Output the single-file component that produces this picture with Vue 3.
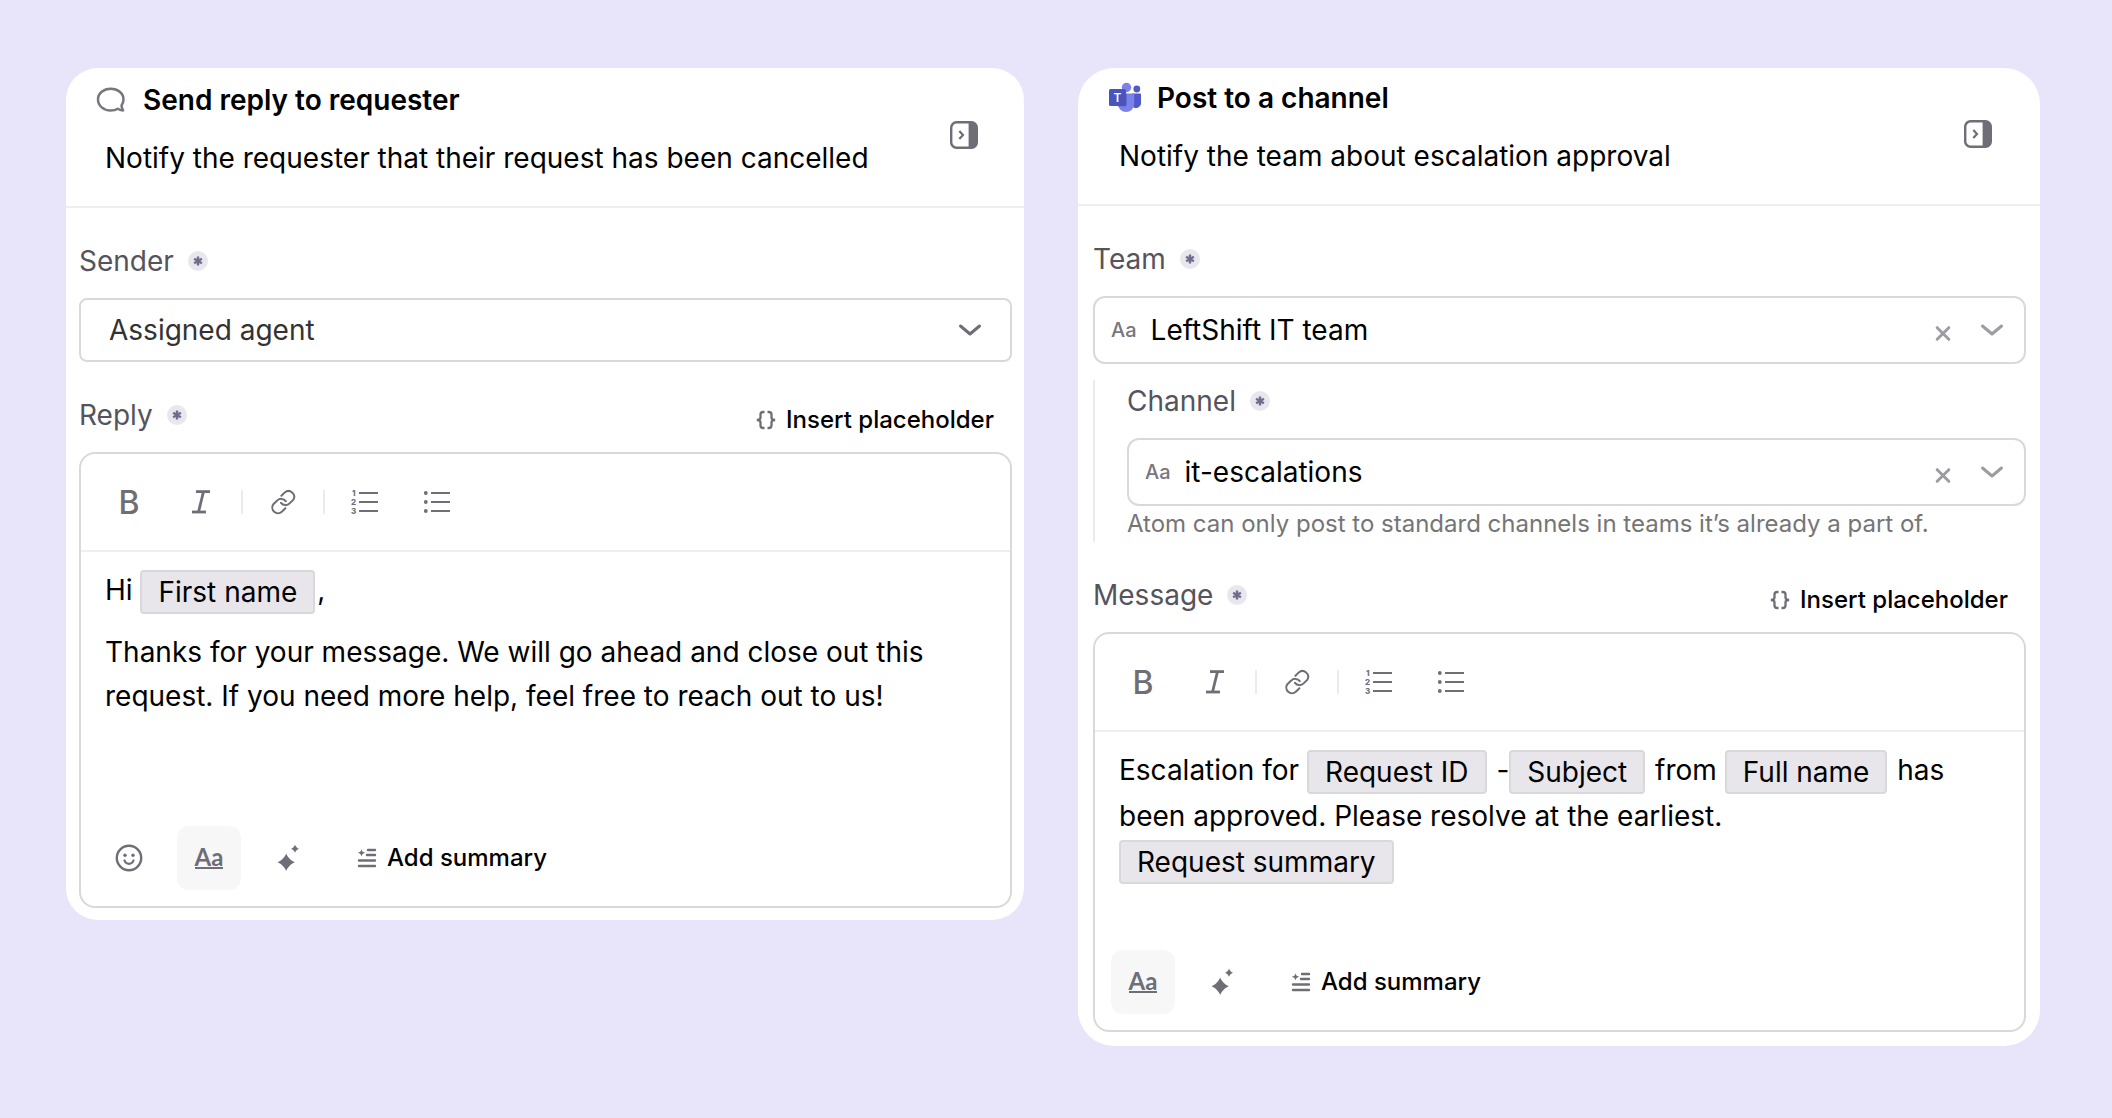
<script setup>
import { reactive } from "vue";

const cards = reactive([
  {
    id: "reply",
    icon: "chat",
    title: "Send reply to requester",
    description: "Notify the requester that their request has been cancelled",
    fields: [
      {
        id: "sender",
        label: "Sender",
        value: "Assigned agent",
        options: ["Assigned agent", "Workspace"],
      },
    ],
    editor: {
      label: "Reply",
      emoji: true,
      paragraphs: [
        [{ text: "Hi " }, { chip: "First name" }, { text: "," }],
        [
          {
            text: "Thanks for your message. We will go ahead and close out this request. If you need more help, feel free to reach out to us!",
          },
        ],
      ],
    },
  },
  {
    id: "channel-post",
    icon: "teams",
    title: "Post to a channel",
    description: "Notify the team about escalation approval",
    fields: [
      {
        id: "team",
        label: "Team",
        value: "LeftShift IT team",
        options: ["LeftShift IT team"],
        clearable: true,
      },
      {
        id: "channel",
        label: "Channel",
        value: "it-escalations",
        options: ["it-escalations"],
        clearable: true,
        nested: true,
        hint: "Atom can only post to standard channels in teams it’s already a part of.",
      },
    ],
    editor: {
      label: "Message",
      emoji: false,
      paragraphs: [
        [
          { text: "Escalation for " },
          { chip: "Request ID" },
          { text: " -" },
          { chip: "Subject" },
          { text: " from " },
          { chip: "Full name" },
          { text: " has " },
          { text: "been approved. Please resolve at the earliest." },
          { lineBreak: true },
          { chip: "Request summary" },
        ],
      ],
    },
  },
]);

const clearField = (field) => {
  field.value = "";
};
</script>

<template>
  <svg class="sprite" aria-hidden="true">
    <symbol id="chat" viewBox="0 0 32 32">
      <path
        d="M26.500 21.500C27.900 19.600 28.500 17.600 28.500 15.500C28.500 9 22.800 4.700 15.700 4.700S3 9.300 3 15.500S8.500 26.500 15.700 26.500C18.400 26.500 20.800 26 22.700 24.700C24.200 25.700 26 26.200 28.100 26.400C27.200 25 26.700 23.300 26.500 21.500Z"
        fill="none"
        stroke="currentColor"
        stroke-width="2.500"
        stroke-linejoin="round"
      />
    </symbol>
    <symbol id="panel" viewBox="0 0 28 28">
      <path
        fill-rule="evenodd"
        d="M6.500 0H21.500A6.500 6.500 0 0 1 28 6.500V21.500A6.500 6.500 0 0 1 21.500 28H6.500A6.500 6.500 0 0 1 0 21.500V6.500A6.500 6.500 0 0 1 6.500 0ZM6.800 2.400A4.400 4.400 0 0 0 2.400 6.800V21.200A4.400 4.400 0 0 0 6.800 25.600H18.600V2.400Z"
        fill="currentColor"
      />
      <path d="M9.300 10L13 14L9.300 18" fill="none" stroke="currentColor" stroke-width="2.200" />
    </symbol>
    <symbol id="required" viewBox="0 0 20 20">
      <circle cx="10" cy="10" r="10" fill="#e9e7ee" />
      <path
        d="M10 5.500V14.500M6.100 7.750L13.900 12.250M13.900 7.750L6.100 12.250"
        stroke="#716c8c"
        stroke-width="2.400"
      />
    </symbol>
    <symbol id="chevron" viewBox="0 0 24 24">
      <path
        d="M2.500 8L12 16L21.500 8"
        fill="none"
        stroke="currentColor"
        stroke-width="3"
        stroke-linecap="round"
        stroke-linejoin="round"
      />
    </symbol>
    <symbol id="clear" viewBox="0 0 24 24">
      <path
        d="M5.200 9.700L16.800 21.300M16.800 9.700L5.200 21.300"
        stroke="currentColor"
        stroke-width="3"
        stroke-linecap="round"
      />
    </symbol>
    <symbol id="braces" viewBox="0 0 20 20">
      <path
        d="M8.500 2H7.200C5 2 4.500 3 4.500 4.500V7.500C4.500 9 3.600 10 0.800 10C3.600 10 4.500 11 4.500 12.500V15.500C4.500 17 5 18 7.200 18H8.500M11.500 2H12.800C15 2 15.500 3 15.500 4.500V7.500C15.500 9 16.400 10 19.200 10C16.400 10 15.500 11 15.500 12.500V15.500C15.500 17 15 18 12.800 18H11.500"
        fill="none"
        stroke="currentColor"
        stroke-width="2.300"
      />
    </symbol>
    <symbol id="italic" viewBox="0 0 28 28">
      <g stroke="currentColor" stroke-width="2.800">
        <line x1="9" y1="3.600" x2="23" y2="3.600" />
        <line x1="5" y1="24" x2="19" y2="24" />
        <line x1="16.500" y1="3.600" x2="11.500" y2="24" />
      </g>
    </symbol>
    <symbol id="link" viewBox="0 0 28 28">
      <path
        d="M12.400 7.800L15.800 4.400A5.700 5.700 0 0 1 24.400 11.600L20.600 15.400A5.600 5.600 0 0 1 12 14.800"
        fill="none"
        stroke="currentColor"
        stroke-width="2"
        stroke-linecap="round"
      />
      <path
        d="M16.400 20.200L12.800 23.800A5.700 5.700 0 0 1 4.400 16.200L8.200 12.600A5.600 5.600 0 0 1 16.800 13.200"
        fill="none"
        stroke="currentColor"
        stroke-width="2"
        stroke-linecap="round"
      />
    </symbol>
    <symbol id="bullets" viewBox="0 0 28 28">
      <path d="M8 5H27M8 14H27M8 23H27" stroke="currentColor" stroke-width="2.200" />
      <g fill="currentColor">
        <circle cx="2.800" cy="5" r="1.900" />
        <circle cx="2.800" cy="14" r="1.900" />
        <circle cx="2.800" cy="23" r="1.900" />
      </g>
    </symbol>
    <symbol id="emoji" viewBox="0 0 28 28">
      <circle cx="14" cy="14" r="12.200" fill="none" stroke="currentColor" stroke-width="2.400" />
      <circle cx="10" cy="11.300" r="1.700" fill="currentColor" />
      <circle cx="18" cy="11.300" r="1.700" fill="currentColor" />
      <path
        d="M9.500 16.500C11 21 17 21 18.500 16.500"
        fill="none"
        stroke="currentColor"
        stroke-width="2.200"
        stroke-linecap="round"
      />
    </symbol>
    <symbol id="sparkle" viewBox="0 0 28 28">
      <path
        d="M11.200 9.500C12.300 12.800 16 16.800 19.800 18.200C16 19.600 12.300 23.600 11.200 27C10.100 23.600 6.400 19.600 2.600 18.200C6.400 16.800 10.100 12.800 11.200 9.500Z"
        fill="currentColor"
      />
      <path
        d="M20 0.800C20.600 2.600 22.200 4.200 24 4.800C22.200 5.400 20.600 7 20 8.800C19.400 7 17.800 5.400 16 4.800C17.800 4.200 19.400 2.600 20 0.800Z"
        fill="currentColor"
      />
    </symbol>
    <symbol id="summary" viewBox="0 0 20 20">
      <path
        d="M11 2H18M10 7H18M2 12.500H18M2 18H18"
        stroke="currentColor"
        stroke-width="2.400"
        stroke-linecap="round"
      />
      <path
        d="M4.500 1.200C5 3.300 6 4.300 8.300 4.800C6 5.300 5 6.300 4.500 8.400C4 6.300 3 5.300 0.700 4.800C3 4.300 4 3.300 4.500 1.200Z"
        fill="currentColor"
      />
    </symbol>
  </svg>

  <main class="page">
    <section v-for="card in cards" :key="card.id" :class="['card', card.id]">
      <header class="card-header">
        <div class="heading">
          <h2>
            <svg v-if="card.icon === 'teams'" class="title-icon" viewBox="0 0 32 32">
              <circle cx="27.800" cy="7" r="3.400" fill="#5059c9" />
              <path d="M23 11.500H31A1 1 0 0 1 32 12.500V20.500A5 5 0 0 1 23 24z" fill="#5059c9" />
              <circle cx="17.500" cy="5.500" r="4.700" fill="#7b83eb" />
              <path d="M9 11.500H24A1.200 1.200 0 0 1 25.200 12.700V22A8 8 0 0 1 9 22z" fill="#7b83eb" />
              <path d="M9 11.500H18V22.500A2 2 0 0 1 16 24.500H9z" fill="#4c53b8" opacity="0.500" />
              <rect x="0" y="7" width="17" height="17" rx="1.500" fill="#4b53bc" />
              <text x="8.500" y="19.800" text-anchor="middle" font-size="12" fill="#fff">T</text>
            </svg>
            <svg v-else class="title-icon"><use :href="`#${card.icon}`" /></svg>
            {{ card.title }}
          </h2>
          <p>{{ card.description }}</p>
        </div>
        <button type="button" class="icon-button" aria-label="Collapse panel">
          <svg class="icon"><use href="#panel" /></svg>
        </button>
      </header>

      <div class="card-body">
        <div
          v-for="field in card.fields"
          :key="field.id"
          :class="['field', { nested: field.nested }]"
        >
          <div class="label-row">
            <label :for="field.id">{{ field.label }}</label>
            <svg class="required"><use href="#required" /></svg>
          </div>
          <div :class="['select-box', { clearable: field.clearable }]">
            <span v-if="field.clearable" class="type-mark">Aa</span>
            <select :id="field.id" v-model="field.value">
              <option v-for="option in field.options" :key="option">{{ option }}</option>
            </select>
            <button
              v-if="field.clearable"
              type="button"
              class="clear-button"
              :aria-label="`Clear ${field.label}`"
              @click="clearField(field)"
            >
              <svg><use href="#clear" /></svg>
            </button>
            <svg class="chevron"><use href="#chevron" /></svg>
          </div>
          <p v-if="field.hint" class="hint">{{ field.hint }}</p>
        </div>

        <div class="field">
          <div class="label-row editor-label">
            <label :id="`${card.id}-label`">{{ card.editor.label }}</label>
            <svg class="required"><use href="#required" /></svg>
            <button type="button" class="text-button insert">
              <svg><use href="#braces" /></svg>
              Insert placeholder
            </button>
          </div>
          <div class="editor">
            <div class="toolbar">
              <button type="button" class="icon-button bold" aria-label="Bold">B</button>
              <button type="button" class="icon-button" aria-label="Italic">
                <svg class="icon"><use href="#italic" /></svg>
              </button>
              <span class="separator"></span>
              <button type="button" class="icon-button" aria-label="Link">
                <svg class="icon"><use href="#link" /></svg>
              </button>
              <span class="separator"></span>
              <button type="button" class="icon-button" aria-label="Numbered list">
                <svg class="icon" viewBox="0 0 28 28">
                  <path d="M8 5H27M8 14H27M8 23H27" stroke="currentColor" stroke-width="2.200" />
                  <g font-size="8" font-weight="800" fill="currentColor">
                    <text x="1" y="8">1</text>
                    <text x="0" y="17">2</text>
                    <text x="0" y="26">3</text>
                  </g>
                </svg>
              </button>
              <button type="button" class="icon-button" aria-label="Bulleted list">
                <svg class="icon"><use href="#bullets" /></svg>
              </button>
            </div>
            <div
              class="content"
              role="textbox"
              aria-multiline="true"
              contenteditable="true"
              spellcheck="false"
              :aria-labelledby="`${card.id}-label`"
            >
              <p v-for="(paragraph, i) in card.editor.paragraphs" :key="i">
                <template v-for="(part, j) in paragraph" :key="j"
                  ><span v-if="part.chip" class="chip">{{ part.chip }}</span
                  ><br v-else-if="part.lineBreak" /><span v-else>{{ part.text }}</span></template
                >
              </p>
            </div>
            <div class="editor-footer">
              <button v-if="card.editor.emoji" type="button" class="icon-button" aria-label="Emoji">
                <svg class="icon"><use href="#emoji" /></svg>
              </button>
              <button type="button" class="icon-button active" aria-label="Formatting">
                <span class="format-mark">Aa</span>
              </button>
              <button type="button" class="icon-button" aria-label="Assist">
                <svg class="icon"><use href="#sparkle" /></svg>
              </button>
              <button type="button" class="text-button summary">
                <svg><use href="#summary" /></svg>
                Add summary
              </button>
            </div>
          </div>
        </div>
      </div>
    </section>
  </main>
</template>

<style>
body {
  margin: 0;
  background-color: #e8e4fa;
}
</style>

<style scoped>
.sprite {
  position: absolute;
  width: 0;
  height: 0;
}

.page {
  display: grid;
  grid-template-columns: 479fr 481fr;
  align-items: start;
  gap: 54px;
  padding: 68px 72px 68px 66px;
  font-family: "Inter", sans-serif;
  font-size: 28px;
  color: #000;
}

.card {
  --inset: 13px;
  --edge: 12px;
  --header-top: 10px;
  min-width: 0;
  background-color: #fff;
  border-radius: 32px;
}

.card.channel-post {
  --inset: 15px;
  --edge: 14px;
  --header-top: 8px;
  border-radius: 36px;
}

button {
  padding: 0;
  border: none;
  background: none;
  color: #6f6e77;
  font-family: inherit;
  cursor: pointer;
}

h2,
p {
  margin: 0;
}

.card-header {
  display: flex;
  align-items: center;
  justify-content: space-between;
  padding-right: calc(var(--edge) + 16px);
  padding-bottom: 4px;
  border-bottom: 2px solid #efefef;
}

.heading {
  padding-top: var(--header-top);
  padding-bottom: 22px;
}

.heading h2 {
  display: flex;
  align-items: center;
  gap: 16px;
  padding-left: calc(var(--inset) + 16px);
  font-size: 28px;
  font-weight: 600;
  line-height: 44px;
}

.heading p {
  margin-top: 14px;
  padding-left: calc(var(--inset) + 26px);
  line-height: 44px;
}

.title-icon {
  width: 32px;
  height: 32px;
  color: #77767e;
}

.icon-button {
  display: flex;
  flex-shrink: 0;
  align-items: center;
  justify-content: center;
  width: 64px;
  height: 64px;
  border-radius: 12px;
}

.icon-button.active {
  background-color: #f7f7f7;
}

.icon {
  width: 28px;
  height: 28px;
}

.card-body {
  display: flex;
  flex-direction: column;
  gap: 36px;
  padding: 36px var(--edge) var(--edge) var(--inset);
}

.field.nested {
  margin-top: -20px;
  padding: 4px 0 0 32px;
  border-left: 2px solid #ececec;
}

.label-row {
  display: flex;
  align-items: flex-start;
  margin-bottom: 20px;
  line-height: 34px;
  color: #55545c;
}

.label-row.editor-label {
  margin-bottom: 10px;
}

.required {
  width: 20px;
  height: 20px;
  margin: 7px 0 0 14px;
}

.select-box {
  display: flex;
  align-items: center;
  box-sizing: border-box;
  height: 64px;
  padding: 0 28px;
  border: 2px solid #d9d9d9;
  border-radius: 8px;
  color: #6f6e77;
}

.select-box.clearable {
  height: 68px;
  padding: 0 20px 0 16px;
  border-radius: 12px;
  color: #9d9ca2;
}

.type-mark {
  margin-right: 14px;
  font-size: 20px;
  font-weight: 500;
  color: #77767e;
}

select {
  flex: 1;
  min-width: 0;
  padding: 0;
  border: none;
  outline: none;
  appearance: none;
  background: none;
  font-family: inherit;
  font-size: 28px;
  line-height: 40px;
  color: #333;
}

.clearable select {
  color: #000;
}

.chevron,
.clear-button svg {
  display: block;
  width: 24px;
  height: 24px;
}

.clear-button {
  margin-right: 24px;
  color: inherit;
}

.hint {
  font-size: 24px;
  line-height: 36px;
  color: #757575;
}

.text-button {
  display: flex;
  align-items: center;
  gap: 10px;
  font-size: 24px;
  font-weight: 500;
  line-height: 44px;
  color: #000;
}

.text-button svg {
  width: 20px;
  height: 20px;
  color: #6f6e77;
}

.text-button.insert {
  margin-left: auto;
  padding-right: 18px;
}

.text-button.summary {
  margin-left: 20px;
}

.editor {
  border: 2px solid #d9d9d9;
  border-radius: 16px;
}

.toolbar {
  display: flex;
  align-items: center;
  gap: 8px;
  padding: 16px;
  border-bottom: 2px solid #efefef;
}

.bold {
  font-size: 32px;
  font-weight: 500;
}

.separator {
  width: 2px;
  height: 24px;
  background-color: #ececec;
}

.content {
  box-sizing: border-box;
  min-height: 202px;
  padding: 16px 24px;
  line-height: 44px;
  outline: none;
}

.reply .content {
  min-height: 258px;
}

.content p + p {
  margin-top: 16px;
}

.chip {
  display: inline-block;
  margin-right: 2px;
  padding: 0 16px;
  border: 2px solid #d9d9db;
  border-radius: 4px;
  background-color: #e8e6eb;
  line-height: 40px;
  vertical-align: -2px;
}

.editor-footer {
  display: flex;
  align-items: center;
  gap: 16px;
  padding: 16px;
}

.format-mark {
  border-bottom: 2px solid currentColor;
  font-family: "Lato", sans-serif;
  font-size: 24px;
  font-weight: 700;
  line-height: 20px;
}
</style>
